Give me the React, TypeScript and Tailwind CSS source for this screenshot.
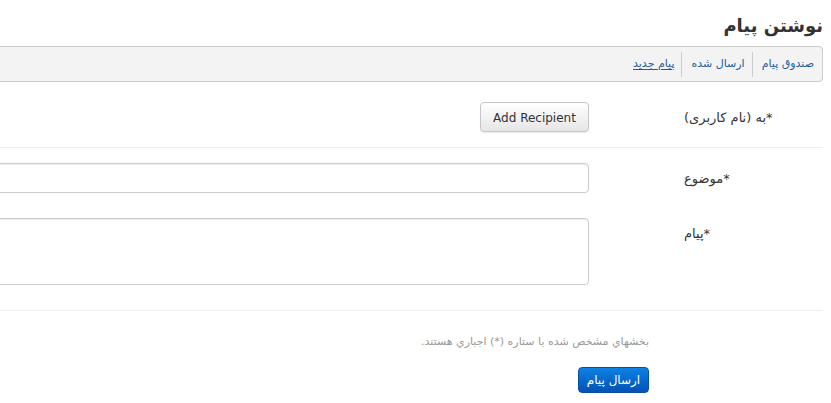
export default function App() {
  return (
    <div
      dir="rtl"
      className="h-[403px] w-[831px] overflow-hidden bg-white pr-2 font-['DejaVu_Sans','Noto_Sans',sans-serif] text-[#333]"
    >
      <div className="w-[1100px]">
        <h1 className="pt-[14px] pr-0 text-[18px] leading-[24px] font-bold text-[#333]">نوشتن پیام</h1>

        <div className="mt-2 flex h-9 items-center rounded-r-[4px] border border-[#ccc] bg-[#f3f3f3] pr-[1px]">
          <a href="#" className="flex h-[25px] items-center border-l border-[#ccc] pr-[7px] pl-[9px] text-[11px] text-[#1d5d9c]">
            صندوق پیام
          </a>
          <a href="#" className="flex h-[25px] items-center border-l border-[#ccc] pr-[7px] pl-[9px] text-[11px] text-[#1d5d9c]">
            ارسال شده
          </a>
          <a href="#" className="flex h-[25px] items-center pr-[7px] text-[11px] text-[#1d5d9c] underline underline-offset-2">
            پیام جدید
          </a>
        </div>

        <div className="flex items-center gap-[95px] border-b border-[#eee] pt-5 pb-[15px]">
          <label className="w-[139px] pt-[2px] text-left text-[13px]">*به (نام کاربری)</label>
          <div className="flex-1">
            <button
              type="button"
              className="h-[30px] w-[109px] rounded-[4px] border border-[#c5c5c5] bg-gradient-to-b from-white to-[#e6e6e6] pt-[2px] text-[12px] text-[#333] shadow-[0_1px_1px_rgba(0,0,0,0.08)]"
            >
              Add Recipient
            </button>
          </div>
        </div>

        <div className="border-b border-[#eee] pt-[15px] pb-[25px]">
          <div className="flex items-center gap-[95px]">
            <label className="w-[139px] pt-[2px] text-left text-[13px]">*موضوع</label>
            <input
              type="text"
              className="h-[30px] flex-1 rounded-[4px] border border-[#ccc] bg-white shadow-[inset_0_1px_1px_rgba(0,0,0,0.075)] outline-none"
            />
          </div>
          <div className="mt-[25px] flex items-start gap-[95px]">
            <label className="w-[139px] pt-[6px] text-left text-[13px]">*پیام</label>
            <textarea className="h-[67px] flex-1 resize-none rounded-[4px] border border-[#ccc] bg-white shadow-[inset_0_1px_1px_rgba(0,0,0,0.075)] outline-none" />
          </div>
        </div>

        <div className="pr-[174px]">
          <p className="mt-[23px] text-[11px] leading-[16px] text-[#999]">
            بخشهاي مشخص شده با ستاره (*) اجباري هستند.
          </p>
          <button
            type="button"
            className="mt-[17px] h-[26px] w-[71px] rounded-[4px] border border-[#0a4d9e] bg-gradient-to-b from-[#0d82e3] to-[#0552b6] text-[12px] text-white"
          >
            ارسال پیام
          </button>
        </div>
      </div>
    </div>
  );
}
